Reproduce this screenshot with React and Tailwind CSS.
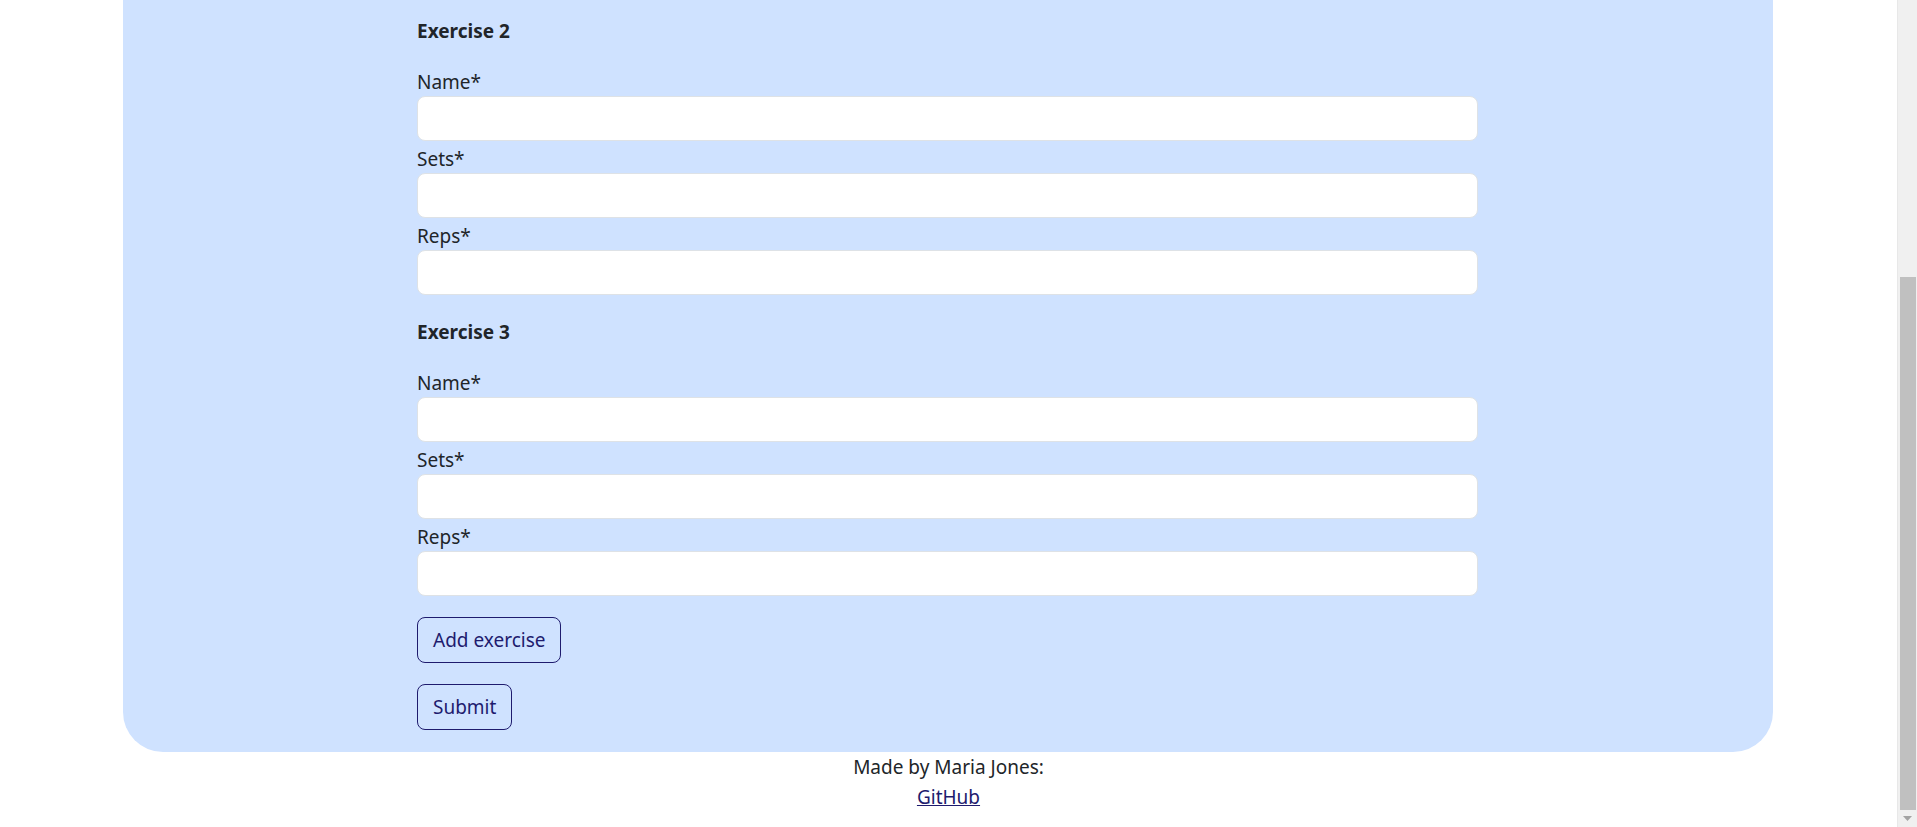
import React from "react";

const font = { fontFamily: '"Segoe UI", "Noto Sans", sans-serif' };

function Field({ label }) {
  return (
    <div>
      <label className="block h-[32px] leading-[37px] overflow-visible text-[19px] text-[#212529]">{label}</label>
      <input
        type="text"
        className="block w-full h-[45px] bg-white border border-[#dee2e6] rounded-[8px] px-3 text-[19px] outline-none"
      />
    </div>
  );
}

function Exercise({ num, first }) {
  return (
    <div className={first ? "" : "mt-[22px]"}>
      <h5 className="text-[19px] leading-[30px] font-bold text-[#212529] mb-[18px]">Exercise {num}</h5>
      <Field label="Name*" />
      <Field label="Sets*" />
      <Field label="Reps*" />
    </div>
  );
}

export default function App() {
  return (
    <div className="flex h-[827px] w-full overflow-hidden bg-white" style={font}>
      <div className="flex-1 flex flex-col">
        <div className="ml-[123px] w-[1650px] bg-[#cfe2ff] rounded-b-[40px] pt-4 pb-[22px] pl-[294px]">
          <div className="w-[1061px]">
            <Exercise num={2} first />
            <Exercise num={3} />
            <button className="mt-[21px] block h-[46px] px-[15px] border border-[#1e1b6e] rounded-[8px] text-[19px] text-[#1e1b6e]">
              Add exercise
            </button>
            <button className="mt-[21px] block h-[46px] px-[15px] border border-[#1e1b6e] rounded-[8px] text-[19px] text-[#1e1b6e]">
              Submit
            </button>
          </div>
        </div>
        <footer className="text-center text-[19px] leading-[30px] text-[#212529]">
          <p>Made by Maria Jones:</p>
          <a href="#" className="underline text-[#1e1b6e]">GitHub</a>
        </footer>
      </div>
      <div className="w-[20px] h-full bg-[#f0f0f0] border-l border-[#e8e8e8] flex flex-col items-center">
        <div className="h-[277px]"></div>
        <div className="w-[16px] h-[533px] bg-[#c0c0c0]"></div>
        <div className="flex-1 flex items-center justify-center">
          <svg width="9" height="5" viewBox="0 0 9 5">
            <path d="M0 0h9L4.5 5z" fill="#a3a3a3" />
          </svg>
        </div>
      </div>
    </div>
  );
}
